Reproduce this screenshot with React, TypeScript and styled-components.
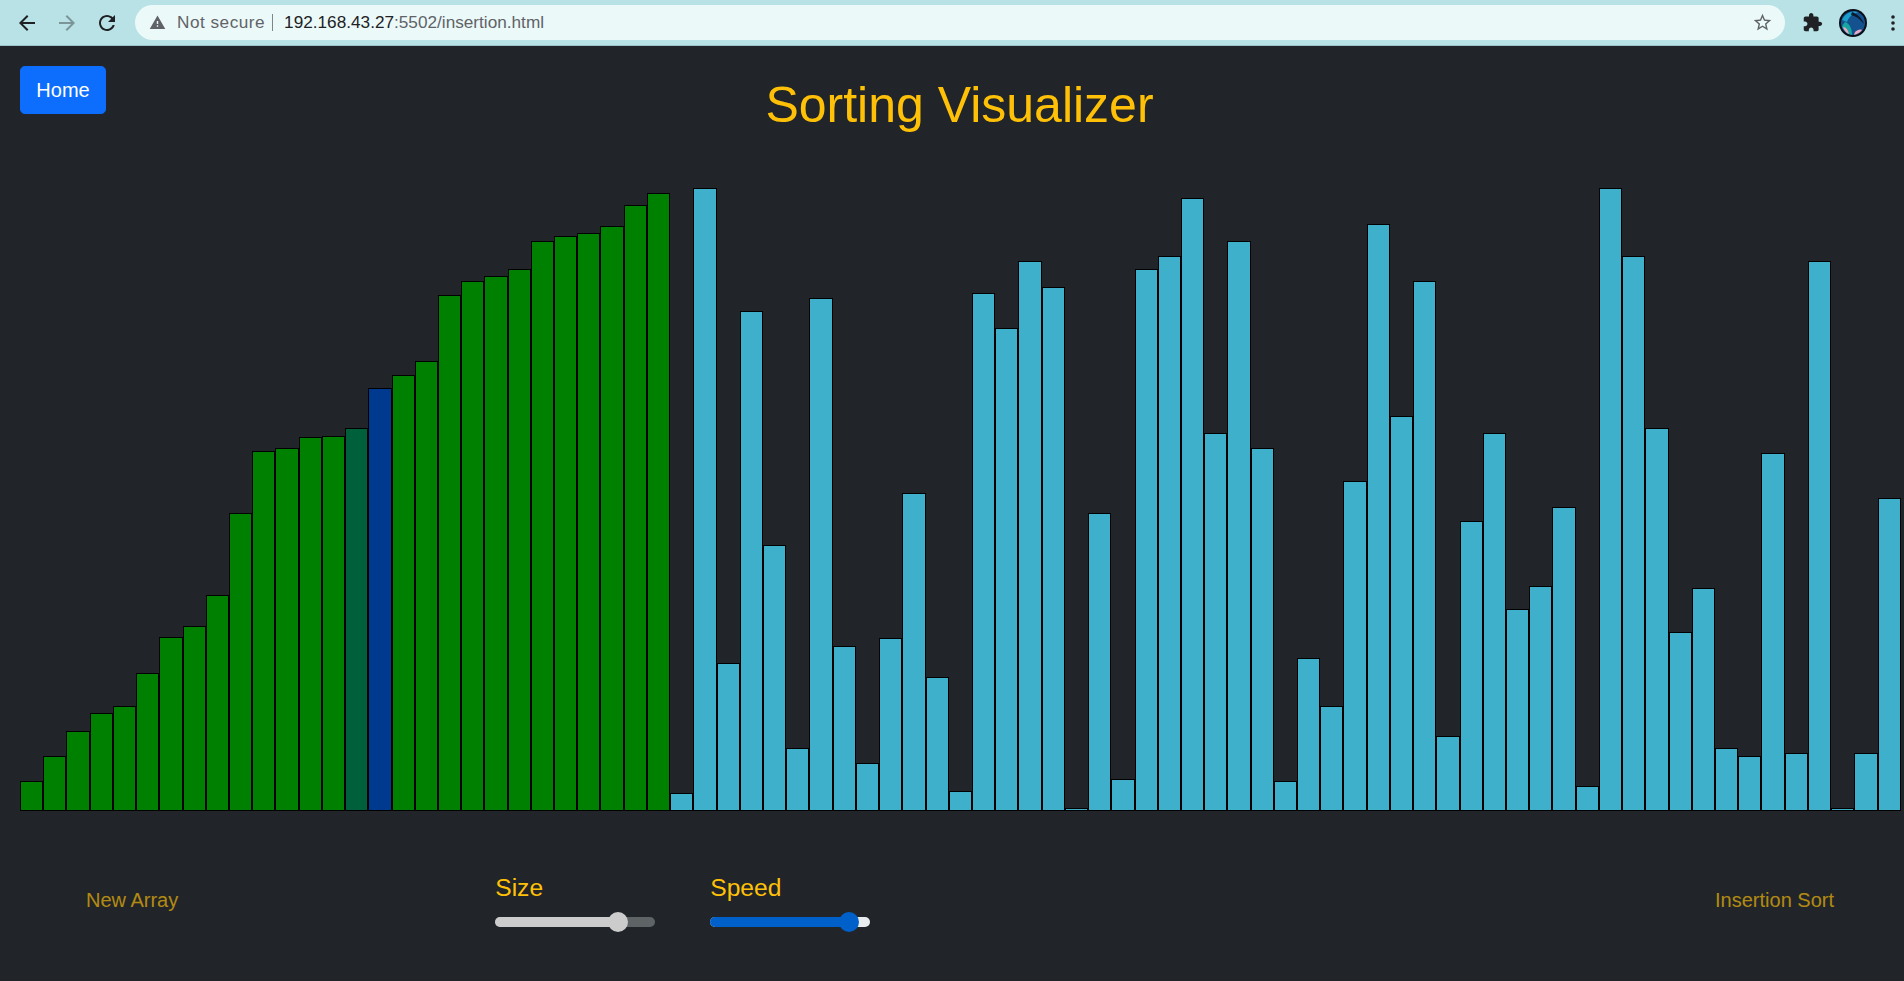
import React from "react";
import styled, { createGlobalStyle } from "styled-components";

const Global = createGlobalStyle`
  html, body { margin: 0; padding: 0; height: 100%; overflow: hidden; background: #212529; }
  body { font-family: "Liberation Sans", Arial, sans-serif; }
`;

const Page = styled.div`
  width: 1904px;
  height: 981px;
  display: flex;
  flex-direction: column;
  background: #212529;
`;

const Toolbar = styled.div`
  height: 45px;
  flex: none;
  display: flex;
  align-items: center;
  background: #b8e2e6;
  border-bottom: 1px solid #9cc3c7;
  padding-left: 15px;
`;

const NavButton = styled.svg<{ $muted?: boolean }>`
  width: 24px;
  height: 24px;
  flex: none;
  margin-right: 16px;
  fill: ${(p) => (p.$muted ? "#7b9598" : "#202124")};
`;

const Omnibox = styled.div`
  width: 1650px;
  height: 35px;
  flex: none;
  display: flex;
  align-items: center;
  border-radius: 18px;
  background: #ecf9f9;
  padding: 0 12px 0 14px;
  box-sizing: border-box;
  font-family: "Liberation Sans", Arial, sans-serif;
  font-size: 17.2px;
  color: #5f6368;
`;

const WarnIcon = styled.svg`
  width: 17px;
  height: 17px;
  fill: #5f6368;
  margin-right: 11px;
`;

const SecurityText = styled.span`
  letter-spacing: 0.5px;
`;

const Divider = styled.span`
  width: 1px;
  height: 17px;
  background: #7d8789;
  margin: 0 11px 0 7px;
`;

const Host = styled.span`
  color: #202124;
`;

const StarIcon = styled.svg`
  width: 21px;
  height: 21px;
  margin-left: auto;
  fill: #5f6368;
`;

const ExtIcon = styled.svg`
  width: 21px;
  height: 21px;
  margin-left: 17px;
  fill: #202124;
  flex: none;
`;

const Avatar = styled.svg`
  width: 28px;
  height: 28px;
  margin-left: 16px;
  flex: none;
`;

const MenuDots = styled.svg`
  width: 4px;
  height: 16px;
  margin-left: 24px;
  flex: none;
  fill: #202124;
`;

const Main = styled.main`
  flex: 1;
  display: flex;
  flex-direction: column;
`;

const Header = styled.header`
  height: 140px;
  flex: none;
  display: grid;
  grid-template-columns: 106px 1fr 111px;
  padding-left: 20px;
  box-sizing: border-box;
`;

const HomeButton = styled.button`
  grid-column: 1;
  margin-top: 20px;
  height: 48px;
  width: 86px;
  padding: 0;
  border: 1px solid #0d6efd;
  border-radius: 4.8px;
  background: #0d6efd;
  color: #fff;
  font: 20px/1.5 "Liberation Sans", Arial, sans-serif;
`;

const Title = styled.h1`
  grid-column: 2;
  margin: 29px 0 0;
  text-align: center;
  font: 400 50px/1.2 "Liberation Sans", Arial, sans-serif;
  color: #ffc107;
`;

const Chart = styled.div`
  height: 625px;
  flex: none;
  display: flex;
  align-items: flex-end;
  margin: 0 3.5px 0 20px;
`;

const barColors = {
  done: "#008000",
  pivot: "#00603c",
  key: "#003a8f",
  idle: "#3eb0cb",
};

const Bar = styled.div<{ $kind: keyof typeof barColors }>`
  flex: 1 1 0;
  box-sizing: border-box;
  border: 1px solid #000;
  background: ${(p) => barColors[p.$kind]};
`;

const Footer = styled.footer`
  flex: 1;
  display: flex;
  padding: 62px 53px 0 69px;
  box-sizing: border-box;
`;

const DisabledButton = styled.button`
  height: 48px;
  padding: 0 16px;
  margin-top: 3px;
  border: 1px solid transparent;
  background: transparent;
  color: #ffc107;
  opacity: 0.65;
  font: 20px/1.5 "Liberation Sans", Arial, sans-serif;
`;

const PushRight = styled(DisabledButton)`
  margin-left: auto;
`;

const Control = styled.div<{ $gap: number }>`
  width: 160px;
  margin-left: ${(p) => p.$gap}px;
  display: flex;
  flex-direction: column;
`;

const Label = styled.label`
  font-size: 24.6px;
  line-height: 29px;
  color: #ffc107;
  margin-bottom: 15px;
`;

const Track = styled.div<{ $rest: string }>`
  position: relative;
  height: 10px;
  border-radius: 5px;
  background: ${(p) => p.$rest};
`;

const Fill = styled.div<{ $color: string }>`
  height: 100%;
  border-radius: 5px 0 0 5px;
  background: ${(p) => p.$color};
`;

const Thumb = styled.div<{ $color: string }>`
  position: absolute;
  top: -5px;
  width: 20px;
  height: 20px;
  margin-left: -10px;
  border-radius: 50%;
  background: ${(p) => p.$color};
`;

const tops = [
  644, 623, 603, 588, 582, 555, 525, 516, 491, 423, 372, 370, 361, 360, 353, 320, 310, 298, 244, 232, 228, 222, 199, 195,
  193, 187, 170, 160, 654, 156, 547, 257, 450, 617, 246, 533, 629, 526, 407, 558, 652, 242, 271, 216, 237, 666, 423, 642,
  222, 212, 164, 357, 199, 370, 644, 543, 582, 397, 185, 343, 232, 607, 430, 357, 502, 483, 418, 648, 156, 212, 353, 521,
  485, 617, 623, 374, 621, 216, 666, 621, 411,
];

const kindOf = (i: number): keyof typeof barColors => {
  if (i === 14) return "pivot";
  if (i === 15) return "key";
  return i < 28 ? "done" : "idle";
};

function Slider({ value, fill, rest, thumb }: { value: number; fill: string; rest: string; thumb: string }) {
  return (
    <Track $rest={rest}>
      <Fill $color={fill} style={{ width: `${value}%` }} />
      <Thumb $color={thumb} style={{ left: `${value}%` }} />
    </Track>
  );
}

export default function App() {
  return (
    <Page>
      <Global />
      <Toolbar>
        <NavButton viewBox="0 0 24 24">
          <path d="M20 11H7.83l5.59-5.59L12 4l-8 8 8 8 1.41-1.41L7.83 13H20v-2z" />
        </NavButton>
        <NavButton viewBox="0 0 24 24" $muted>
          <path d="M12 4l-1.41 1.41L16.17 11H4v2h12.17l-5.58 5.59L12 20l8-8z" />
        </NavButton>
        <NavButton viewBox="0 0 24 24">
          <path d="M17.65 6.35C16.2 4.9 14.21 4 12 4c-4.42 0-7.99 3.58-7.99 8s3.57 8 7.99 8c3.73 0 6.84-2.55 7.73-6h-2.08c-.82 2.33-3.04 4-5.65 4-3.31 0-6-2.69-6-6s2.69-6 6-6c1.66 0 3.14.69 4.22 1.78L13 11h7V4l-2.35 2.35z" />
        </NavButton>
        <Omnibox>
          <WarnIcon viewBox="0 0 24 24">
            <path d="M1 21h22L12 2 1 21zm12-3h-2v-2h2v2zm0-4h-2v-4h2v4z" />
          </WarnIcon>
          <SecurityText>Not secure</SecurityText>
          <Divider />
          <span>
            <Host>192.168.43.27</Host>:5502/insertion.html
          </span>
          <StarIcon viewBox="0 0 24 24">
            <path d="M22 9.24l-7.19-.62L12 2 9.19 8.63 2 9.24l5.46 4.73L5.82 21 12 17.27 18.18 21l-1.63-7.03L22 9.24zM12 15.4l-3.76 2.27 1-4.28-3.32-2.88 4.38-.38L12 6.1l1.71 4.04 4.38.38-3.32 2.88 1 4.28L12 15.4z" />
          </StarIcon>
        </Omnibox>
        <ExtIcon viewBox="0 0 24 24">
          <path d="M20.5 11H19V7c0-1.1-.9-2-2-2h-4V3.5C13 2.12 11.88 1 10.5 1S8 2.12 8 3.5V5H4c-1.1 0-1.99.9-1.99 2v3.8H3.5c1.49 0 2.7 1.21 2.7 2.7s-1.21 2.7-2.7 2.7H2V20c0 1.1.9 2 2 2h3.8v-1.5c0-1.49 1.21-2.7 2.7-2.7 1.49 0 2.7 1.21 2.7 2.7V22H17c1.1 0 2-.9 2-2v-4h1.5c1.38 0 2.5-1.12 2.5-2.5S21.88 11 20.5 11z" />
        </ExtIcon>
        <Avatar viewBox="0 0 28 28">
          <circle cx="14" cy="14" r="14" fill="#0b0f18" />
          <circle cx="14" cy="14" r="12" fill="#14528f" />
          <path d="M3 11 C6 4 13 1 20 3 C15 4 10 7 8 13 Z" fill="#1c9fc9" />
          <path d="M6 13 C10 14 13 19 13 26 C8 25 4 21 3 17 Z" fill="#17a5a2" />
          <path d="M4 18 C7 18 9 21 10 25 C7 24 5 21 4 18 Z" fill="#f0a6c0" />
          <path d="M16 23 C18 21 21 20 23 21 C21 24 18 25 15 26 Z" fill="#e9a9c4" />
          <path d="M13 3 C18 5 23 9 25 15 C21 10 17 7 12 6 Z" fill="#0b1a2c" />
        </Avatar>
        <MenuDots viewBox="0 0 4 16">
          <circle cx="2" cy="2" r="1.8" />
          <circle cx="2" cy="8" r="1.8" />
          <circle cx="2" cy="14" r="1.8" />
        </MenuDots>
      </Toolbar>
      <Main>
        <Header>
          <HomeButton>Home</HomeButton>
          <Title>Sorting Visualizer</Title>
        </Header>
        <Chart>
          {tops.map((top, i) => (
            <Bar key={i} $kind={kindOf(i)} style={{ height: Math.max(3, 812 - Math.round(top * 1.2143)) }} />
          ))}
        </Chart>
        <Footer>
          <DisabledButton disabled>New Array</DisabledButton>
          <Control $gap={300}>
            <Label>Size</Label>
            <Slider value={76.5} fill="#cccccc" rest="#5e6366" thumb="#cccccc" />
          </Control>
          <Control $gap={55}>
            <Label>Speed</Label>
            <Slider value={86.5} fill="#0060c9" rest="#e9ecef" thumb="#0060c9" />
          </Control>
          <PushRight disabled>Insertion Sort</PushRight>
        </Footer>
      </Main>
    </Page>
  );
}
